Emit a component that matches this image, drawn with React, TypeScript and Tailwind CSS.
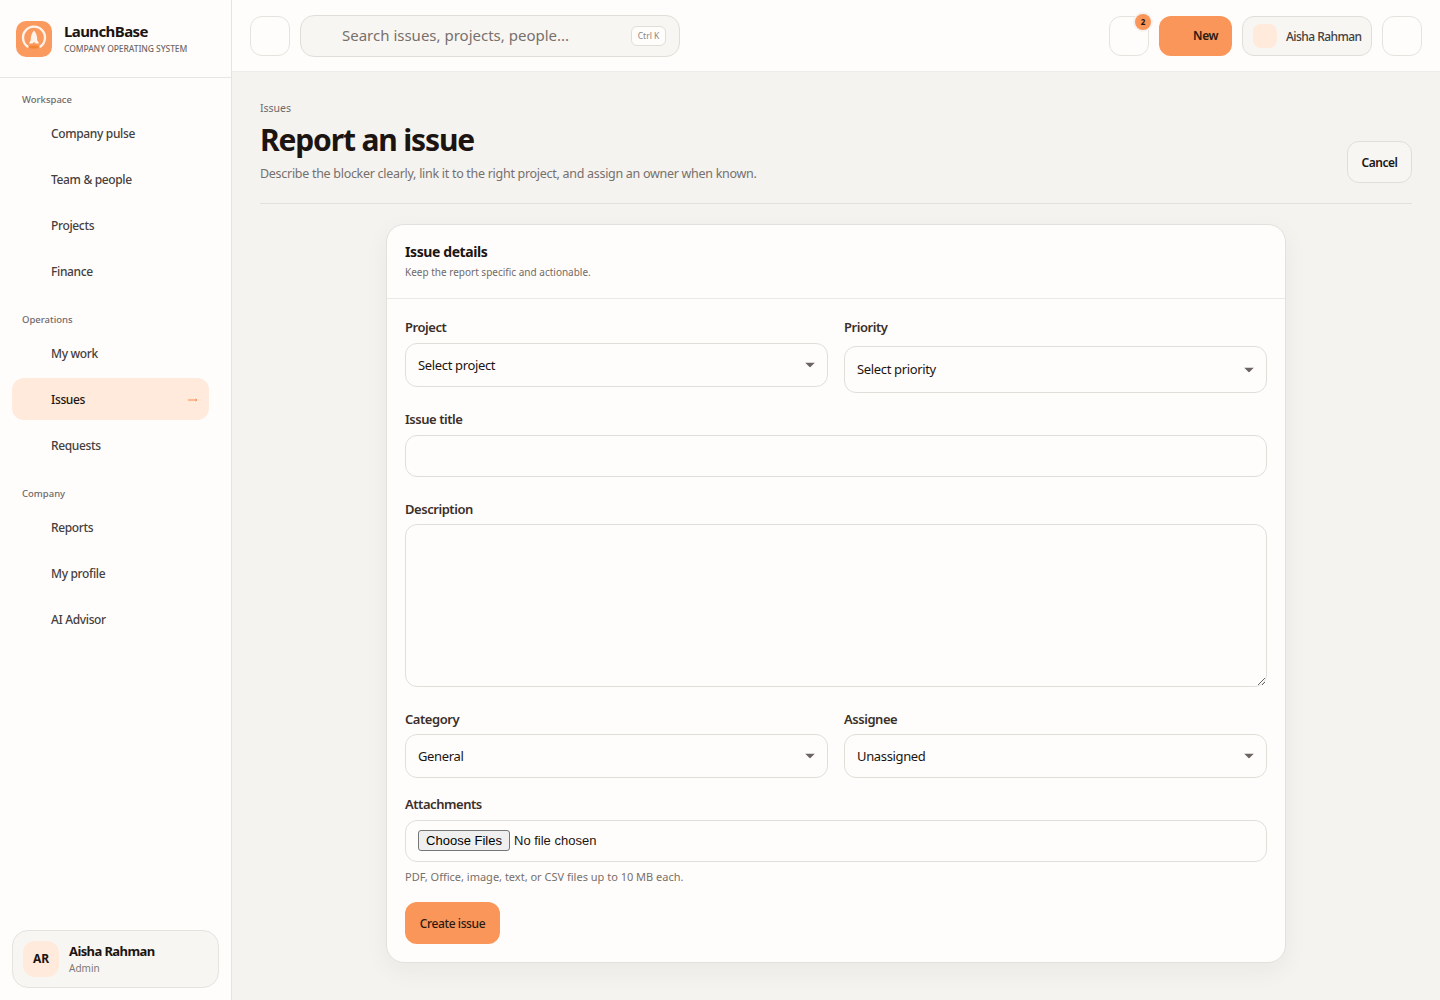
const navGroups = [
  { label: "Workspace", items: ["Company pulse", "Team & people", "Projects", "Finance"] },
  { label: "Operations", items: ["My work", "Issues", "Requests"] },
  { label: "Company", items: ["Reports", "My profile", "AI Advisor"] },
];

function Logo() {
  return (
    <div className="flex h-9 w-9 shrink-0 items-center justify-center rounded-[10px] bg-[#fb9a5f]">
      <svg viewBox="0 0 36 36" className="h-9 w-9">
        <path d="M11.500 25.500a11 11 0 1 1 13 0" fill="none" stroke="#fff3ea" strokeWidth="2.4" strokeLinecap="round" />
        <path d="M18 9.500c2.600 3 3.400 6.500 3.200 9.500l1.800 3.500h-3.400l-1.600-1.600-1.600 1.600H13l1.800-3.500c-.2-3 .6-6.500 3.200-9.500z" fill="#fff3ea" />
        <path d="M12.500 25.500c2 3 9 3 11 0-3-1.400-8-1.400-11 0z" fill="#f58431" />
      </svg>
    </div>
  );
}

function Sidebar() {
  return (
    <aside className="flex h-screen w-[232px] shrink-0 flex-col border-r border-[#e6e3df] bg-[#fffdfb]">
      <div className="flex h-[78px] shrink-0 items-center gap-3 border-b border-[#e9e6e2] pl-4">
        <Logo />
        <div>
          <div className="-mt-[2px] text-[15px] leading-5 font-bold tracking-[-0.6px] text-[#1c1410]">LaunchBase</div>
          <div className="mt-[2px] text-[8.500px] leading-3 font-medium tracking-[-0.08px] text-[#6f6a6a] uppercase">Company operating system</div>
        </div>
      </div>
      <nav className="flex-1 pt-[14px] pr-[22px] pl-3">
        {navGroups.map((group) => (
          <div key={group.label} className="mb-[20px]">
            <div className="flex h-4 items-center pt-px pl-[10px] text-[9.500px] font-medium text-[#6f6a6a]">{group.label}</div>
            <div className="mt-1 flex flex-col gap-1">
              {group.items.map((item) => (
                <div
                  key={item}
                  className={
                    item === "Issues"
                      ? "flex h-[42px] items-center justify-between rounded-xl bg-[#ffeadb] pt-[2px] pr-[11px] pl-[39px] text-xs font-medium tracking-[-0.35px] text-[#1c1410]"
                      : "flex h-[42px] items-center pt-[2px] pl-[39px] text-xs font-medium tracking-[-0.35px] text-[#45403d]"
                  }
                >
                  {item}
                  {item === "Issues" && (
                    <svg viewBox="0 0 10 6" className="h-[6px] w-[10px]" fill="none" stroke="#fb8a4a" strokeWidth="1">
                      <path d="M0 3h9M7.500 2l1.500 1-1.500 1" />
                    </svg>
                  )}
                </div>
              ))}
            </div>
          </div>
        ))}
      </nav>
      <div className="mr-3 mb-3 ml-3 flex h-[58px] items-center gap-[10px] rounded-2xl border border-[#e6e3df] bg-[#f8f6f3] pl-[10px]">
        <div className="flex h-9 w-9 items-center justify-center rounded-xl bg-[#ffeadb] text-xs font-bold text-[#1c1410]">AR</div>
        <div className="-mt-[2px]">
          <div className="text-[13px] leading-[18px] font-bold tracking-[-0.6px] text-[#1c1410]">Aisha Rahman</div>
          <div className="mt-px text-[10px] leading-[14px] text-[#7d7876]">Admin</div>
        </div>
      </div>
    </aside>
  );
}

function Topbar() {
  return (
    <header className="flex h-[72px] shrink-0 items-center border-b border-[#eeece8] bg-[#fffdfb] px-[18px]">
      <button className="block h-10 w-10 rounded-xl border border-[#e6e3df] bg-[#fffdfb]" />
      <div className="ml-[10px] flex h-[42px] w-[380px] items-center justify-between rounded-[14px] border border-[#e1deda] bg-[#f8f6f3] pr-[13px] pl-[41px]">
        <span className="text-[15px] text-[#77706c]">Search issues, projects, people...</span>
        <span className="flex h-5 w-[35px] items-center justify-center rounded-md border border-[#e1deda] bg-[#fffdfb] pt-[2px] text-[8.500px] text-[#8a8582]">Ctrl K</span>
      </div>
      <div className="ml-auto flex items-center gap-[10px]">
        <div className="relative">
          <button className="block h-10 w-10 rounded-xl border border-[#e6e3df] bg-[#fffdfb]" />
          <span className="absolute -top-[2px] -right-[2px] flex h-4 w-4 items-center justify-center rounded-full bg-[#fa9659] text-[8px] font-bold text-[#1c1410] ring-2 ring-[#f5f3f0]">2</span>
        </div>
        <button className="block h-10 w-[73px] rounded-xl bg-[#fa9659] pt-px pl-[20px] text-xs font-semibold tracking-[-0.5px] text-[#2a1a10]">New</button>
        <div className="flex h-10 w-[130px] items-center gap-[9px] rounded-xl border border-[#e1deda] bg-[#f8f6f3] pl-[10px]">
          <span className="h-6 w-6 rounded-lg bg-[#ffeadb]" />
          <span className="pt-[2px] text-xs font-medium tracking-[-0.55px] text-[#45403d]">Aisha Rahman</span>
        </div>
        <button className="block h-10 w-10 rounded-xl border border-[#e6e3df] bg-[#fffdfb]" />
      </div>
    </header>
  );
}

function Label({ children }: { children: string }) {
  return <label className="block text-[13px] leading-[18px] font-semibold tracking-[-0.45px] text-[#3a2f2a]">{children}</label>;
}

const fieldClass = "w-full rounded-xl border border-[#e1deda] bg-[#fffdfb] px-3 text-[13px] tracking-[-0.35px] text-[#1c1410] outline-none";

function Select({ value, className, textClass = "" }: { value: string; className: string; textClass?: string }) {
  return (
    <div className={`relative ${className}`}>
      <select className={`${fieldClass} ${textClass} block h-full appearance-none`}>
        <option>{value}</option>
      </select>
      <svg viewBox="0 0 10 5" className="pointer-events-none absolute top-1/2 right-[13px] h-[5px] w-[10px] -translate-y-1/2" fill="#6b6462">
        <path d="M0 0h10L5 5z" />
      </svg>
    </div>
  );
}

export default function App() {
  return (
    <div className="flex h-screen overflow-hidden bg-[#f4f3f0] font-['Noto_Sans',sans-serif]">
      <Sidebar />
      <div className="flex min-w-0 flex-1 flex-col">
        <Topbar />
        <main className="flex-1 px-[28px] pt-[28px]">
          <div className="flex items-end justify-between border-b border-[#e3e1dd] pb-[19px]">
            <div>
              <div className="text-[10.500px] leading-4 text-[#6f6a6a]">Issues</div>
              <h1 className="mt-1 text-[30px] leading-[40px] font-bold tracking-[-1.150px] text-[#1c1410]">Report an issue</h1>
              <p className="mt-1 text-[12.500px] leading-5 tracking-[-0.29px] text-[#77706c]">Describe the blocker clearly, link it to the right project, and assign an owner when known.</p>
            </div>
            <button className="mb-px h-[42px] w-[65px] rounded-xl border border-[#e1deda] bg-[#f8f6f3] pt-[2px] text-xs font-semibold tracking-[-0.5px] text-[#1c1410]">Cancel</button>
          </div>

          <section className="mx-auto mt-5 h-[739px] w-[900px] rounded-[18px] border border-[#e3e1dd] bg-[#fffdfb] shadow-[0_8px_24px_rgba(60,40,20,0.05)]">
            <div className="flex h-[74px] flex-col justify-center border-b border-[#ebe9e5] px-[18px] pb-[2px]">
              <h2 className="text-sm leading-5 font-bold tracking-[-0.4px] text-[#1c1410]">Issue details</h2>
              <p className="mt-[2px] text-[10px] leading-4 text-[#6f6a6a]">Keep the report specific and actionable.</p>
            </div>
            <form className="px-[18px] pt-[19px]">
              <div className="grid grid-cols-2 gap-4">
                <div>
                  <Label>Project</Label>
                  <Select value="Select project" className="mt-[7px] h-[44px]" textClass="pt-[2px]" />
                </div>
                <div>
                  <Label>Priority</Label>
                  <Select value="Select priority" className="mt-[10px] h-[47px]" />
                </div>
              </div>
              <div className="mt-[17px]">
                <Label>Issue title</Label>
                <input className={`${fieldClass} mt-[7px] block h-[42px]`} />
              </div>
              <div className="mt-[23px]">
                <Label>Description</Label>
                <textarea className={`${fieldClass} mt-[6px] block h-[163px]`} />
              </div>
              <div className="mt-[23px] grid grid-cols-2 gap-4">
                <div>
                  <Label>Category</Label>
                  <Select value="General" className="mt-[6px] h-[44px]" textClass="pt-[2px]" />
                </div>
                <div>
                  <Label>Assignee</Label>
                  <Select value="Unassigned" className="mt-[6px] h-[44px]" textClass="pt-[2px]" />
                </div>
              </div>
              <div className="mt-[17px]">
                <Label>Attachments</Label>
                <input
                  type="file"
                  multiple
                  className="mt-[7px] block h-[42px] w-full rounded-xl border border-[#e1deda] bg-[#fffdfb] px-3 py-[9px] font-['Liberation_Sans',sans-serif] text-[13px] text-[#1c1410] file:mr-1 file:h-[21px] file:w-[92px] file:rounded-[3px] file:border file:border-[#767676] file:bg-[#efefef] file:text-[13px] file:text-black"
                />
              </div>
              <p className="mt-[7px] text-[11px] leading-4 text-[#77706c]">PDF, Office, image, text, or CSV files up to 10 MB each.</p>
              <button type="button" className="mt-[17px] h-[42px] w-[95px] rounded-xl bg-[#fa9659] pt-[2px] text-xs font-medium tracking-[-0.4px] text-[#2a1a10]">Create issue</button>
            </form>
          </section>
        </main>
      </div>
    </div>
  );
}
